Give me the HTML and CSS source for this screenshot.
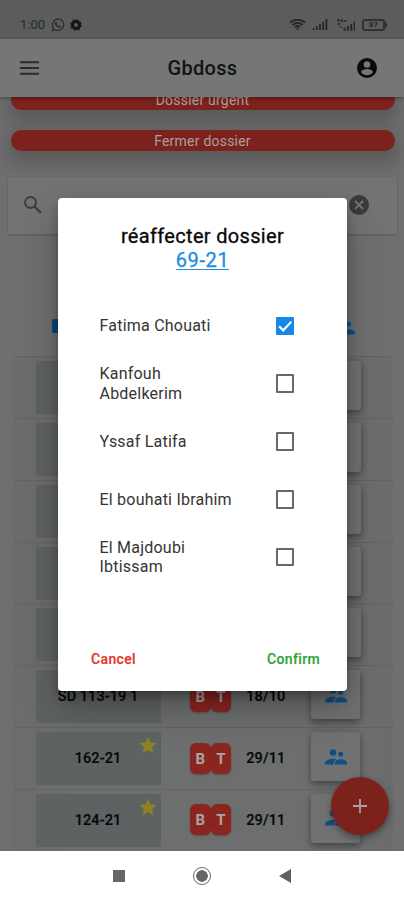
FILE: index.html
```html
<!DOCTYPE html>
<html lang="fr">
<head>
<meta charset="utf-8">
<title>Gbdoss</title>
<link rel="stylesheet" href="styles.css">
</head>
<body>
<svg width="0" height="0" class="defs">
  <symbol id="people" viewBox="0 0 22 16"><circle cx="8" cy="3.400" r="3.200"/><circle cx="15.700" cy="5.200" r="2.500"/><path d="M0 15.500v-1.300C0 11.500 4.500 9.700 8.500 9.700c1 0 2 .1 2.700.4-1.500 1.200-2.400 2.700-2.400 4v1.400zM10 15.500v-1.300c0-2.400 3-3.900 6-3.900s6 1.500 6 3.900v1.300z"/></symbol>
  <symbol id="star" viewBox="0 0 24 24"><path d="M12 18 18.500 22l-1.700-7.500L22.500 9.600l-7.500-.6L12 2 9 9l-7.500.6 5.700 4.900L5.500 22z"/></symbol>
</svg>
<div class="screen">
  <header class="status">
    <span class="clock">1:00</span>
    <svg class="wa" viewBox="0 0 24 24"><path d="M2.500 21.500l1.400-5A9.700 9.700 0 1 1 7.500 20z" fill="none" stroke="currentColor" stroke-width="2"/><path d="M8.200 6.800c.7-.5 1.300-.2 1.600.6l.6 1.500-.9 1.300c.9 1.900 2.200 3.100 4.200 3.900l1.200-1.300 2.300 1.100c.2 2-1.300 3-2.800 3-4.300-.5-7.500-4-7.800-7.400 0-1.100.6-2 1.600-2.700z"/></svg>
    <svg class="gear" viewBox="0 0 24 24"><circle cx="12" cy="12" r="7" fill="none" stroke="currentColor" stroke-width="6"/><circle cx="12" cy="12" r="10.200" fill="none" stroke="currentColor" stroke-width="3" stroke-dasharray="4 4"/></svg>
    <span class="grow"></span>
    <svg class="wifi" viewBox="0 0 18 13"><path d="M1 4.500c4.500-4 11.500-4 16 0M3.500 7c3-2.700 8-2.700 11 0M6.200 9.500c1.600-1.500 4-1.500 5.600 0" fill="none" stroke="currentColor" stroke-width="2.100"/><path d="M7.200 10.700h3.600L9 12.800z"/></svg>
    <svg class="bars" viewBox="0 0 16 12"><path d="M0 10h2v2H0zM3.500 8h2v4h-2zM7 5.500h2V12H7zM10.500 3h2v9h-2zM14 0h2v12h-2z"/></svg>
    <svg class="bars2" viewBox="0 0 20 12"><path d="M1 0h3v2H1zM5 0h2v3H5zM8 1h3v1.500H8zM2 4h2v2H2zM4 7.500h2V9H4zM8 9h2v3H8zM11.500 7h2v5h-2zM15 5h2v7h-2zM18.500 2H20v10h-1.500z"/></svg>
    <span class="battery">87</span>
  </header>
  <nav class="appbar">
    <svg class="menu" viewBox="0 0 20 14"><path d="M0 1h20M0 7h20M0 13h20" stroke="currentColor" stroke-width="2"/></svg>
    <h1>Gbdoss</h1>
    <svg class="account" viewBox="0 0 20 20"><path fill-rule="evenodd" d="M10 0a10 10 0 1 0 0 20 10 10 0 0 0 0-20zm0 3.200a3.300 3.300 0 1 1 0 6.600 3.300 3.300 0 0 1 0-6.600zm0 14a7.200 7.200 0 0 1-6-3.200c0-2 4-3.100 6-3.100s6 1.100 6 3.100a7.200 7.200 0 0 1-6 3.200z"/></svg>
  </nav>
  <main class="content">
    <div class="pill cut"><span>Dossier urgent</span></div>
    <div class="pill"><span>Fermer dossier</span></div>
    <div class="search">
      <svg class="lens" viewBox="0 0 18 18"><circle cx="6.500" cy="6.500" r="5.500" fill="none" stroke="currentColor" stroke-width="1.800"/><path d="M10.700 10.700 17 17" stroke="currentColor" stroke-width="2.300"/></svg>
      <svg class="clear" viewBox="0 0 20 20"><circle cx="10" cy="10" r="10"/><path d="M6 6l8 8M14 6l-8 8" stroke="#727272" stroke-width="2"/></svg>
    </div>
    <div class="heads"><i class="folder"></i><svg class="ppl"><use href="#people"/></svg></div>
    <div class="table">
      <div class="row"><div class="ref"></div><div class="tile"></div></div>
      <div class="row"><div class="ref"></div><div class="tile"></div></div>
      <div class="row"><div class="ref"></div><div class="tile"></div></div>
      <div class="row"><div class="ref"></div><div class="tile"></div></div>
      <div class="row"><div class="ref"></div><div class="tile"></div></div>
      <div class="row"><div class="ref">SD 113-19 1</div><div class="chips"><b>B</b><b>T</b></div><span class="date">18/10</span><div class="tile"><svg class="ppl"><use href="#people"/></svg></div></div>
      <div class="row"><div class="ref">162-21<svg class="star"><use href="#star"/></svg></div><div class="chips"><b>B</b><b>T</b></div><span class="date">29/11</span><div class="tile"><svg class="ppl"><use href="#people"/></svg></div></div>
      <div class="row"><div class="ref">124-21<svg class="star"><use href="#star"/></svg></div><div class="chips"><b>B</b><b>T</b></div><span class="date">29/11</span><div class="tile"><svg class="ppl"><use href="#people"/></svg></div></div>
    </div>
  </main>
  <div class="fab"><svg viewBox="0 0 16 16"><path d="M8 1v14M1 8h14" stroke="currentColor" stroke-width="1.800"/></svg></div>
  <section class="dialog">
    <h2>réaffecter dossier<br><a>69-21</a></h2>
    <div class="options">
      <div class="option"><span>Fatima Chouati</span><i class="box on"><svg viewBox="0 0 18 18"><path d="M3 9l4 4 8-8.500" fill="none" stroke="#fff" stroke-width="2.100"/></svg></i></div>
      <div class="option"><span>Kanfouh<br>Abdelkerim</span><i class="box"></i></div>
      <div class="option"><span>Yssaf Latifa</span><i class="box"></i></div>
      <div class="option"><span>El bouhati Ibrahim</span><i class="box"></i></div>
      <div class="option"><span>El Majdoubi<br>Ibtissam</span><i class="box"></i></div>
    </div>
    <div class="actions"><span class="cancel">Cancel</span><span class="confirm">Confirm</span></div>
  </section>
</div>
<footer class="sysnav">
  <i class="square"></i>
  <i class="home"></i>
  <svg class="back" viewBox="0 0 12 14"><path d="M12 0v14L0 7z"/></svg>
</footer>
</body>
</html>
```
FILE: styles.css
```css
* { box-sizing: border-box; }
body { margin: 0; width: 404px; height: 900px; overflow: hidden; background: #fff; font-family: Roboto, "Liberation Sans", sans-serif; }
svg { fill: currentColor; display: block; flex: none; }
.defs { position: absolute; }
.screen { position: relative; height: 851px; overflow: hidden; background: #6f6f6f; display: flex; flex-direction: column; }

.status { height: 39px; flex: none; background: #5b5d5c; padding: 10px 16px 0 20px; display: flex; align-items: center; color: #272928; }
.clock { font-size: 13px; letter-spacing: 0; width: 31px; }
.wa { width: 14px; height: 14px; }
.gear { width: 12px; height: 12px; margin-left: 5px; color: #151716; }
.grow { flex: 1; }
.wifi { width: 17px; height: 13px; margin-right: 6px; }
.bars { width: 16px; height: 11px; margin-right: 8px; }
.bars2 { width: 19px; height: 12px; margin-right: 7px; }
.battery { width: 23px; height: 12px; border: 2px solid #303231; border-radius: 3px; font-size: 8px; font-weight: 700; line-height: 8px; text-align: center; margin-right: 3px; position: relative; }
.battery::after { content: ""; position: absolute; right: -4px; top: 1px; width: 2px; height: 6px; background: #303231; border-radius: 0 2px 2px 0; }

.appbar { height: 58px; flex: none; background: #757776; display: flex; align-items: center; justify-content: space-between; padding: 0 27px 0 20px; color: #2a2c2b; box-shadow: 0 1px 4px rgba(0,0,0,.4); position: relative; z-index: 1; }
.menu { width: 19px; height: 14px; }
.appbar h1 { margin: 0 0 0 9px; font-size: 20px; font-weight: 500; letter-spacing: .3px; color: #111312; }
.account { width: 20px; height: 20px; color: #090b0a; }

.content { flex: 1; min-height: 0; display: flex; flex-direction: column; align-items: center; }
.pill { width: 384px; height: 21px; flex: none; margin-top: 20px; margin-left: 1px; border-radius: 11px; background: #7d211c; color: #a8a09f; font-size: 14px; letter-spacing: .22px; line-height: 22px; text-align: center; box-shadow: 0 8px 18px 5px rgba(0,0,0,.19); }
.pill.cut { margin-top: -8px; }
.search { width: 389px; height: 57px; flex: none; margin-top: 26px; background: #737373; box-shadow: 0 1px 2px rgba(0,0,0,.22); display: flex; align-items: center; justify-content: space-between; padding: 0 28px 2px 16px; color: #3b3b3b; }
.lens { width: 18px; height: 18px; }
.clear { width: 20px; height: 20px; }
.heads { width: 404px; height: 122px; flex: none; padding: 85px 49px 0 52px; display: flex; justify-content: space-between; color: #0c4676; }
.folder { width: 18px; height: 14px; border-radius: 2px; background: #0c4676; }
.ppl { width: 22px; height: 16px; color: #0e4f86; }
.table { width: 380px; margin-left: 1px; flex: none; background: linear-gradient(90deg, #6c6c6c 0 22px, #6c6f6e 60px 340px, #696c6b); }
.row { height: 61.850px; border-top: 1px solid #626463; display: flex; align-items: flex-start; padding: 4px 32px 0 23px; justify-content: space-between; }
.ref { width: 125px; height: 53px; background: #5f6263; display: flex; align-items: center; justify-content: center; font-size: 14.500px; font-weight: 500; letter-spacing: .05px; color: #080808; position: relative; -webkit-text-stroke: .2px; }
.star { position: absolute; right: 3px; top: 3px; width: 20px; height: 20px; color: #8c8326; }
.chips { display: flex; height: 52px; align-items: center; margin-left: 16px; }
.chips b { width: 20.500px; height: 31px; border-radius: 6px; background: #8b2520; color: #aaa5a4; font-size: 15px; font-weight: 700; line-height: 32px; text-align: center; box-shadow: 0 1px 2px rgba(0,0,0,.25); }
.date { width: 42px; line-height: 53px; font-size: 14.500px; font-weight: 500; letter-spacing: .1px; color: #080808; text-align: center; margin-right: 11px; -webkit-text-stroke: .2px; }
.tile { width: 49px; height: 49px; border-radius: 3px; background: #707171; display: flex; align-items: center; justify-content: center; box-shadow: 0 4px 7px rgba(0,0,0,.3), 0 0 6px rgba(0,0,0,.12); }

.fab { position: absolute; left: 331px; top: 777px; width: 58px; height: 58px; border-radius: 50%; background: #7d211c; color: #a8a09f; display: flex; align-items: center; justify-content: center; box-shadow: 0 3px 7px rgba(0,0,0,.4); }
.fab svg { width: 16px; height: 16px; }

.dialog { position: absolute; left: 58px; top: 198px; width: 289px; height: 493px; z-index: 2; border-radius: 4px; background: #fff; box-shadow: 0 11px 15px -7px rgba(0,0,0,.3), 0 18px 36px 3px rgba(0,0,0,.2), 0 3px 8px rgba(0,0,0,.15); display: flex; flex-direction: column; }
.dialog h2 { margin: 26px 0 0; font-size: 20px; line-height: 24px; font-weight: 400; letter-spacing: .33px; text-align: center; color: #080808; -webkit-text-stroke: .3px; }
.dialog a { color: #238de0; text-decoration: underline; text-decoration-thickness: 1px; text-underline-offset: 2px; letter-spacing: .6px; }
.options { margin-top: 25px; padding: 0 53px 0 41.500px; }
.option { height: 57.800px; display: flex; align-items: center; justify-content: space-between; font-size: 16px; line-height: 19.500px; letter-spacing: .22px; color: #353535; }
.box { width: 18.500px; height: 18.500px; border: 2px solid #686868; border-radius: 1px; }
.box.on { background: #1688e8; border: 0; }
.actions { margin-top: auto; height: 36px; margin-bottom: 14px; padding: 0 27px 0 33px; display: flex; align-items: center; justify-content: space-between; font-size: 14px; font-weight: 500; letter-spacing: .35px; -webkit-text-stroke: .2px; }
.cancel { color: #e5392c; }
.confirm { color: #34a43a; }

.sysnav { height: 49px; display: flex; align-items: center; padding: 1px 0 0 113px; }
.square { width: 12px; height: 12px; background: #666; }
.home { width: 18px; height: 18px; margin-left: 68px; border: 1.500px solid #666; border-radius: 50%; background: radial-gradient(circle, #666 0 5.500px, #fff 6px); }
.back { width: 12px; height: 14px; margin-left: 68px; color: #606060; }
```
